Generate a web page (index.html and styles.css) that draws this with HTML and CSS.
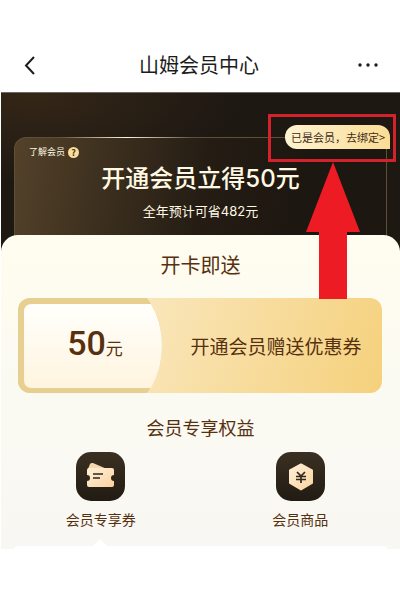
FILE: index.html
```
<!DOCTYPE html>
<html lang="zh-CN">
<head>
    <meta charset="UTF-8">
    <meta name="viewport" content="width=device-width, initial-scale=1.0">
    <title>山姆会员中心</title>
    <link rel="stylesheet" href="styles.css">
</head>
<body>
    <header class="topbar">
        <button class="icon-btn" aria-label="返回">
            <svg width="20" height="20" viewBox="0 0 20 20" fill="none" stroke="#1c1c1c" stroke-width="2">
                <path d="M14 2L6 10.500L14 19"/>
            </svg>
        </button>
        <h1 class="topbar-title">山姆会员中心</h1>
        <button class="icon-btn" aria-label="更多">
            <svg width="20" height="20" viewBox="0 0 20 20" fill="#1c1c1c">
                <circle cx="2" cy="10" r="1.700"/>
                <circle cx="10" cy="10" r="1.700"/>
                <circle cx="18" cy="10" r="1.700"/>
            </svg>
        </button>
    </header>

    <main class="page">
        <section class="hero">
            <div class="card">
                <a class="about" href="#">了解会员<span class="help">?</span></a>
                <h2 class="card-title">开通会员立得50元</h2>
                <p class="card-sub">全年预计可省482元</p>
                <a class="bind" href="#">已是会员，去绑定&gt;</a>
                <div class="mark"></div>
                <svg class="arrow" width="54" height="137" viewBox="0 0 54 137">
                    <path d="M27 0L54 70H41V137H13V70H0Z" fill="#ed1c24"/>
                </svg>
            </div>
        </section>

        <section class="sheet">
            <h2 class="gift-title">开卡即送</h2>
            <div class="coupon">
                <svg class="coupon-bg" width="144" height="95" viewBox="0 0 144 95">
                    <defs>
                        <linearGradient id="paper" x1="0" y1="0" x2="0" y2="1">
                            <stop offset="0" stop-color="#fffffc"/>
                            <stop offset="1" stop-color="#fff4df"/>
                        </linearGradient>
                    </defs>
                    <path d="M0 0H129Q144 20 144 47.500T129 95H0Z" fill="#e6cf91"/>
                    <path d="M14 6H133Q144 24 144 47.500T133 90H14Q6 90 6 82V14Q6 6 14 6Z" fill="url(#paper)"/>
                </svg>
                <p class="amount"><span class="num">50</span>元</p>
                <p class="coupon-text">开通会员赠送优惠券</p>
            </div>

            <h3 class="rights-title">会员专享权益</h3>
            <div class="rights">
                <a class="right" href="#">
                    <svg width="49" height="49" viewBox="0 0 49 49">
                        <defs>
                            <linearGradient id="tile" x1="0" y1="0" x2="0" y2="1">
                                <stop offset="0" stop-color="#3b3022"/>
                                <stop offset="1" stop-color="#211b13"/>
                            </linearGradient>
                            <linearGradient id="gold" x1="0" y1="0" x2="1" y2="1">
                                <stop offset="0" stop-color="#fff0d8"/>
                                <stop offset="1" stop-color="#fad3a0"/>
                            </linearGradient>
                        </defs>
                        <rect width="49" height="49" rx="15" fill="url(#tile)"/>
                        <path d="M12 17L14 12Q15 10.500 17 11L31 17Z" fill="#f5d7ad"/>
                        <path d="M13 16H36Q38 16 38 18V23A3 3 0 0 0 38 29V33Q38 35 36 35H13Q11 35 11 33V29A3 3 0 0 0 11 23V18Q11 16 13 16Z" fill="url(#gold)"/>
                        <path d="M17 22H27M17 26H24" stroke="#30271c" stroke-width="1.400"/>
                    </svg>
                    <span>会员专享券</span>
                </a>
                <a class="right" href="#">
                    <svg width="49" height="49" viewBox="0 0 49 49">
                        <rect width="49" height="49" rx="15" fill="url(#tile)"/>
                        <path d="M25 12.500L36 18.500V31L25 37.500L14 31V18.500Z" fill="url(#gold)" stroke="url(#gold)" stroke-width="2" stroke-linejoin="round"/>
                        <path d="M21 20L25 24L29 20M20 24.500H30M20 27.500H30M25 24V31" fill="none" stroke="#30271c" stroke-width="1.700"/>
                    </svg>
                    <span>会员商品</span>
                </a>
            </div>
            <div class="panel"></div>
        </section>
    </main>
</body>
</html>
```
FILE: styles.css
```
*{
    margin: 0;
    padding: 0;
    box-sizing: border-box;
}
body{
    background-color: #fff;
    color: #57300f;
    font-family: "Noto Sans CJK SC", sans-serif;
}
a{
    color: inherit;
    text-decoration: none;
}
h1, h2, h3{
    font-weight: 400;
    text-align: center;
}
.topbar{
    display: flex;
    align-items: center;
    justify-content: space-between;
    padding: 50px 22px 12px 20px;
}
.topbar-title{
    color: #1c1c1c;
    font-size: 20px;
    line-height: 30px;
}
.icon-btn{
    display: flex;
    border: none;
    background: none;
}
.page{
    margin-left: 1px;
}
.hero{
    padding: 44px 13px 0;
    background: radial-gradient(ellipse at 8% 0, #352717, transparent 40%), #1e1813;
    border-top: 1px solid #6d6861;
}
.card{
    position: relative;
    padding: 5px 14px 30px;
    border: 1px solid #5d5036;
    border-bottom: none;
    border-radius: 12px 12px 0 0;
    background: linear-gradient(100deg, #54422a, #3c2f1e 25%, #251d14 50%, #1d1711 75%);
    color: #fff9e3;
}
/* light streak on the top edge */
.card::before{
    content: "";
    position: absolute;
    top: -1px;
    left: 12%;
    width: 36%;
    height: 1px;
    background: linear-gradient(90deg, transparent, #fff5dc, transparent);
}
.about{
    display: flex;
    align-items: center;
    gap: 3px;
    font-size: 9px;
    line-height: 18px;
}
.help{
    width: 11px;
    height: 11px;
    border-radius: 50%;
    background-color: #f8dd9c;
    color: #4b351b;
    font-weight: 700;
    line-height: 11px;
    text-align: center;
}
.card-title{
    font-family: Inter, "Noto Sans CJK SC", sans-serif;
    font-size: 24px;
    font-weight: 500;
    line-height: 36px;
}
.card-sub{
    padding-top: 4px;
    font-family: Inter, "Noto Sans CJK SC", sans-serif;
    font-size: 13px;
    line-height: 20px;
    text-align: center;
}
.bind{
    position: absolute;
    top: -13px;
    right: -4px;
    padding: 0 5px 0 6px;
    border-radius: 12px 12px 0 12px;
    background: linear-gradient(90deg, #fff3d1, #fbdc94);
    color: #3e2c17;
    font-size: 11px;
    line-height: 24px;
    white-space: nowrap;
}
.mark{
    position: absolute;
    top: -24px;
    right: -10px;
    width: 128px;
    height: 48px;
    border: 3px solid #d3222c;
}
.arrow{
    position: absolute;
    top: 24px;
    right: 26px;
    z-index: 1;
}
.sheet{
    position: relative;
    padding-top: 15px;
    margin-top: -16px;
    border-radius: 17px 17px 0 0;
    background: linear-gradient(#fffdef, #fbfaf2 50%, #f8f7f3);
}
.gift-title{
    font-size: 20px;
    line-height: 30px;
}
.coupon{
    position: relative;
    display: flex;
    align-items: center;
    height: 95px;
    margin: 18px 18px 0 17px;
    border-radius: 12px;
    overflow: hidden;
    background: linear-gradient(110deg, #f9e5b8 35%, #f5d17c);
}
.coupon-bg{
    position: absolute;
    top: 0;
    left: 0;
}
.amount{
    position: relative;
    width: 144px;
    padding-left: 10px;
    font-size: 17px;
    line-height: 48px;
    text-align: center;
}
.num{
    font-family: Roboto, sans-serif;
    font-size: 34px;
    font-weight: 500;
}
.coupon-text{
    flex: 1;
    padding-left: 8px;
    font-size: 19px;
    text-align: center;
}
.rights-title{
    padding-top: 20px;
    font-size: 18px;
    line-height: 28px;
}
.rights{
    display: grid;
    grid-template-columns: 1fr 1fr;
    padding: 11px 0 17px;
}
.right{
    display: flex;
    flex-direction: column;
    align-items: center;
    gap: 8px;
    font-size: 14px;
    line-height: 20px;
}
.panel{
    position: relative;
    height: 3px;
    margin: 0 13px;
    border-radius: 3px 3px 0 0;
    background-color: #fff;
}
/* pointer under the selected item */
.panel::before{
    content: "";
    position: absolute;
    bottom: 100%;
    left: 23%;
    border: 7px solid transparent;
    border-top: none;
    border-bottom-color: #fff;
    transform: translateX(-50%);
}
```
